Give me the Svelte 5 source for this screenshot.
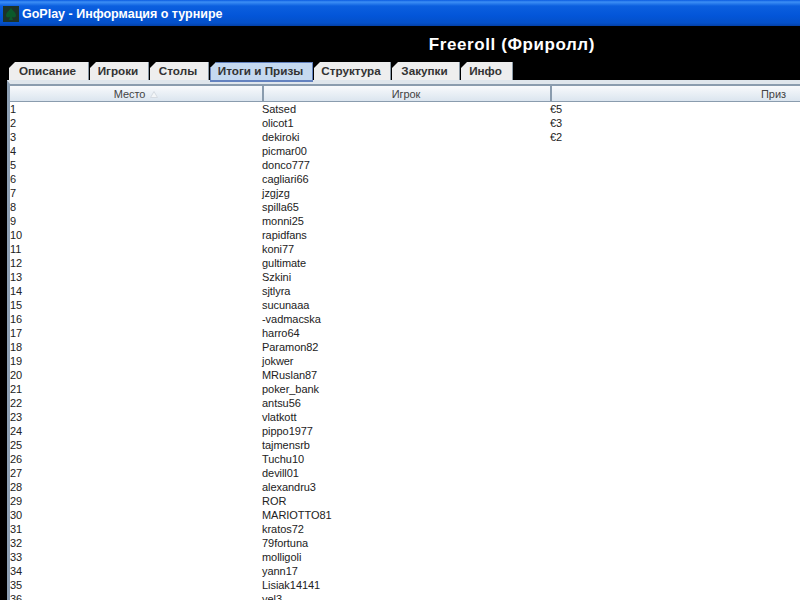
<script>
	const tabs = [
		{ label: "Описание", width: 80 },
		{ label: "Игроки", width: 59 },
		{ label: "Столы", width: 59 },
		{ label: "Итоги и Призы", width: 103, active: true },
		{ label: "Структура", width: 77 },
		{ label: "Закупки", width: 68 },
		{ label: "Инфо", width: 52 }
	];

	const players = [
		"Satsed", "olicot1", "dekiroki", "picmar00", "donco777", "cagliari66",
		"jzgjzg", "spilla65", "monni25", "rapidfans", "koni77", "gultimate",
		"Szkini", "sjtlyra", "sucunaaa", "-vadmacska", "harro64", "Paramon82",
		"jokwer", "MRuslan87", "poker_bank", "antsu56", "vlatkott", "pippo1977",
		"tajmensrb", "Tuchu10", "devill01", "alexandru3", "ROR", "MARIOTTO81",
		"kratos72", "79fortuna", "molligoli", "yann17", "Lisiak14141", "yel3"
	];
	const prizes = ["€5", "€3", "€2"];
</script>

<div class="window">
	<div class="titlebar">
		<svg class="logo" width="16" height="16" viewBox="0 0 16 16">
			<rect width="16" height="16" fill="#1d3328" />
			<path d="M8 2 C10 5 13 6.5 13 9.5 C13 11.5 10.5 12 9 10.8 L10 14 H6 L7 10.8 C5.5 12 3 11.5 3 9.5 C3 6.5 6 5 8 2 Z" fill="#0b5a2b" />
		</svg>
		<span>GoPlay - Информация о турнире</span>
	</div>

	<div class="heading">
		<h1>Freeroll (Фриролл)</h1>
	</div>

	<div class="tabs">
		{#each tabs as tab}
			<div class="tab" class:active={tab.active} style="width: {tab.width}px">{tab.label}</div>
		{/each}
	</div>

	<div class="panel">
		<div class="table">
			<div class="row head">
				<div class="cell">Место <svg class="sort" width="8" height="7" viewBox="0 0 8 7"><path d="M4 0.5 L7.5 6.5 H0.5 Z" fill="#f4f6f8" stroke="#d5dbe2" /></svg></div>
				<div class="cell">Игрок</div>
				<div class="cell">Приз</div>
			</div>
			{#each players as player, i}
				<div class="row">
					<div class="cell">{i + 1}</div>
					<div class="cell">{player}</div>
					<div class="cell">{prizes[i] ?? ""}</div>
				</div>
			{/each}
		</div>
	</div>
</div>

<style>
	:global(body) {
		margin: 0;
		background: #000;
		overflow: hidden;
	}

	.window {
		width: 800px;
		height: 600px;
		overflow: hidden;
		background: #000;
		font-family: "Liberation Sans", Arial, sans-serif;
	}

	.titlebar {
		height: 26px;
		display: flex;
		align-items: center;
		gap: 3px;
		padding-left: 3px;
		background: linear-gradient(#0a5ae0 0, #3d8ff5 2px, #0b5fdf 6px, #0355d8 16px, #0450c8 23px, #0340a8 26px);
		color: #fff;
		font-size: 12.5px;
		font-weight: bold;
	}

	.logo {
		flex: none;
		margin-top: 1px;
	}

	.titlebar span {
		padding-top: 2px;
	}

	.heading {
		height: 36px;
		display: flex;
		justify-content: flex-end;
		padding-right: 205px;
	}

	h1 {
		margin: 0;
		padding-top: 9px;
		color: #fff;
		font-size: 17px;
		line-height: 20px;
		font-weight: bold;
		letter-spacing: 0.58px;
	}

	.tabs {
		height: 18px;
		display: flex;
		gap: 1px;
		padding-left: 9px;
	}

	.tab {
		box-sizing: border-box;
		height: 18px;
		padding-right: 2px;
		background: #eeeeee;
		border-right: 1px solid #8a99a6;
		color: #333;
		font-size: 11.7px;
		font-weight: bold;
		line-height: 18px;
		text-align: center;
		clip-path: polygon(6px 0, 100% 0, 100% 100%, 0 100%, 0 6px);
	}

	.tab.active {
		height: 20px;
		background: #c5d9f0;
		border: 1px solid #6382bf;
		border-bottom-width: 2px;
		line-height: 16px;
		position: relative;
		z-index: 1;
	}

	.panel {
		margin-left: 7px;
		height: 520px;
		box-sizing: border-box;
		background: #fff;
		border-top: 4px solid #dfe6ec;
		border-left: 3px solid #8da0b4;
		overflow: hidden;
	}

	.table {
		width: 990px;
		font-size: 11px;
		letter-spacing: -0.05px;
		color: #222;
	}

	.row {
		display: grid;
		grid-template-columns: 252px 288px 450px;
		height: 14px;
		line-height: 14px;
	}

	.cell {
		white-space: nowrap;
	}

	.head {
		box-sizing: border-box;
		height: 18px;
		line-height: 16px;
		background: linear-gradient(#f8fafc, #dbe5ef);
		border-top: 2px solid #8a9cae;
		border-bottom: 1px solid #8a9cae;
		color: #444;
	}

	.head .cell {
		height: 15px;
		padding-right: 2px;
		text-align: center;
		box-sizing: border-box;
	}

	.head .cell:first-child {
		padding-right: 0;
	}

	.head .cell:last-child {
		padding-right: 5px;
	}

	.head .cell + .cell {
		border-left: 2px solid #8a9cae;
	}

	.sort {
		margin-left: 2px;
	}
</style>
